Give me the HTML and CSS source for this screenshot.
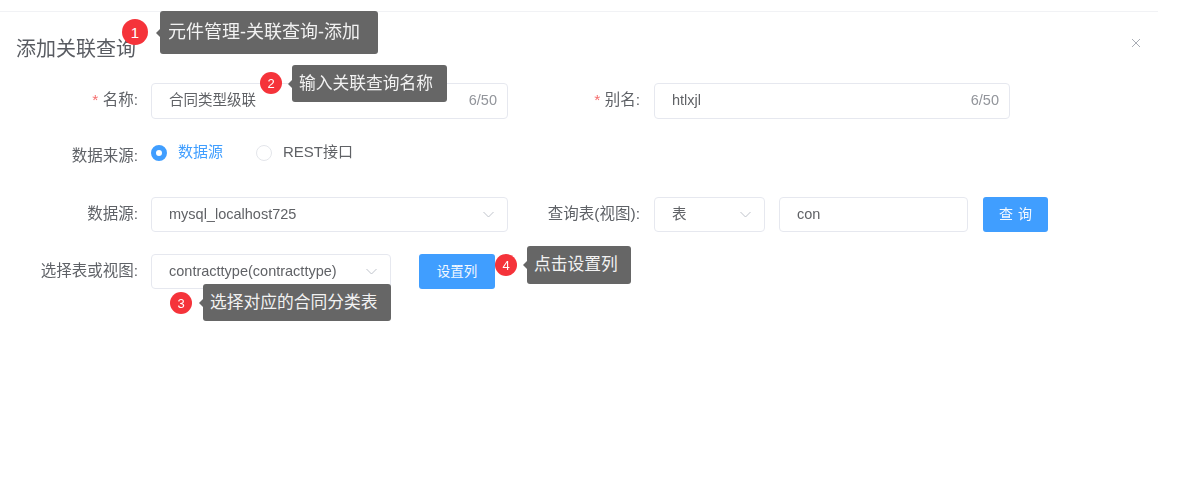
FILE: index.html
```html
<!DOCTYPE html>
<html lang="zh">
<head>
<meta charset="utf-8">
<title>添加关联查询</title>
<link rel="stylesheet" href="styles.css">
</head>
<body>
<div class="page">
  <div class="topline"></div>
  <header class="head">
    <h1 class="title">添加关联查询</h1>
    <svg class="close" width="10" height="10" viewBox="0 0 10 10"><path d="M1 1l8 8M9 1L1 9" /></svg>
  </header>
  <form class="form">
    <div class="row row-name">
      <label class="lab"><i>*</i> 名称:</label>
      <div class="box w357"><span>合同类型级联</span><em>6/50</em></div>
      <label class="lab lab2"><i>*</i> 别名:</label>
      <div class="box w356"><span>htlxjl</span><em>6/50</em></div>
    </div>
    <div class="row row-radio">
      <label class="lab lab-low">数据来源:</label>
      <div class="radios">
        <span class="radio on"><b></b>数据源</span>
        <span class="radio"><b></b>REST接口</span>
      </div>
    </div>
    <div class="row row-ds">
      <label class="lab">数据源:</label>
      <div class="box w357"><span>mysql_localhost725</span><svg class="chev" viewBox="0 0 12 7"><path d="M1 1l5 5 5-5"/></svg></div>
      <label class="lab lab2">查询表(视图):</label>
      <div class="box w111"><span>表</span><svg class="chev" viewBox="0 0 12 7"><path d="M1 1l5 5 5-5"/></svg></div>
      <div class="box w189"><span>con</span></div>
      <button type="button" class="btn btn-q">查 询</button>
    </div>
    <div class="row row-tb">
      <label class="lab">选择表或视图:</label>
      <div class="box w240"><span>contracttype(contracttype)</span><svg class="chev" viewBox="0 0 12 7"><path d="M1 1l5 5 5-5"/></svg></div>
      <button type="button" class="btn btn-c">设置列</button>
    </div>
  </form>

  <div class="badge b1">1</div>
  <div class="tip t1">元件管理-关联查询-添加</div>
  <div class="badge b2">2</div>
  <div class="tip t2">输入关联查询名称</div>
  <div class="badge b3">3</div>
  <div class="tip t3">选择对应的合同分类表</div>
  <div class="badge b4">4</div>
  <div class="tip t4">点击设置列</div>
</div>
</body>
</html>
```
FILE: styles.css
```css
* { box-sizing: border-box; }
html, body { margin: 0; padding: 0; background: #fff; }
body { font-family: "Liberation Sans", "Noto Sans CJK SC", sans-serif; color: #606266; overflow: hidden; }
.page { position: relative; width: 1191px; height: 482px; filter: blur(0.7px); overflow: hidden; }
.topline { height: 1px; width: 1158px; margin-top: 11px; background: #f1f2f5; }
.head { display: flex; justify-content: space-between; align-items: center; height: 52px; padding: 14px 50px 0 16px; }
.title { margin: 0; font-size: 20px; font-weight: 400; color: #595c62; line-height: 28px; position: relative; top: 4px; }
.close { margin-top: -4px; fill: none; stroke: #a9adb5; stroke-width: 1; }
.form { padding-top: 19px; font-size: 14.5px; }
.row { display: flex; align-items: center; }
.row-name { height: 36px; }
.row-radio { height: 36px; margin-top: 16px; }
.row-ds { height: 35px; margin-top: 26px; }
.row-tb { height: 35px; margin-top: 22px; }
.lab { width: 138px; flex: none; text-align: right; font-size: 15.5px; line-height: 20px; color: #5f6267; margin-right: 13px; white-space: nowrap; position: relative; top: -1px; }
.lab-low { top: 3px; }
.lab i { color: #f56c6c; font-style: normal; }
.lab2 { width: 132px; margin-right: 14px; }
.box { display: flex; align-items: center; justify-content: space-between; height: 100%; padding: 0 10px 0 17px; background: #fff; border: 1px solid #e6e8ef; border-radius: 4px; font-size: 14.5px; line-height: 20px; color: #606266; flex: none; }
.box span { position: relative; top: -1px; }
.box em { font-style: normal; font-size: 14.5px; color: #92959b; position: relative; top: -1px; }
.w356 { width: 356px; }
.w357 { width: 357px; }
.w111 { width: 111px; margin-right: 14px; }
.w189 { width: 189px; }
.w240 { width: 240px; }
.chev { width: 13px; height: 7px; margin-right: 2px; fill: none; stroke: #c0c4cc; stroke-width: 1; }
.radios { display: flex; align-items: center; gap: 33px; margin-top: -2px; font-size: 15px; line-height: 20px; }
.radio { display: flex; align-items: center; gap: 11px; color: #606266; }
.radio b { width: 16px; height: 16px; border-radius: 50%; border: 1px solid #e3e5ea; background: #fff; position: relative; top: 1px; }
.radio.on { color: #409eff; }
.radio.on b { border: 5px solid #409eff; }
.btn { height: 35px; border: 0; border-radius: 3px; background: #409eff; color: #f4f9ff; font: 14px "Liberation Sans", "Noto Sans CJK SC", sans-serif; flex: none; padding: 0 0 4px; }
.btn-q { width: 65px; margin-left: 15px; word-spacing: 1px; }
.btn-c { width: 76px; margin-left: 28px; font-size: 13.5px; }
.tip { position: absolute; display: flex; align-items: center; background: #666; color: #f2f2f2; border-radius: 3px; font-size: 16.75px; line-height: 22px; white-space: nowrap; padding: 0 0 0 7px; }
.tip::before { content: ""; position: absolute; left: -4px; top: 50%; margin-top: -4px; border-style: solid; border-width: 4px 4px 4px 0; border-color: transparent #666 transparent transparent; }
.t1 { left: 160px; top: 11px; width: 218px; height: 43px; font-size: 18px; padding: 0 0 2px 8px; }
.t2 { left: 292px; top: 65px; width: 155px; height: 37px; }
.t3 { left: 203px; top: 284px; width: 188px; height: 37px; }
.t4 { left: 527px; top: 246px; width: 104px; height: 38px; }
.badge { position: absolute; display: flex; align-items: center; justify-content: center; width: 22px; height: 22px; border-radius: 50%; background: #f5333a; color: #fff; font-size: 13px; }
.b1 { left: 122px; top: 19px; width: 26px; height: 26px; font-size: 15px; }
.b2 { left: 260px; top: 72px; }
.b3 { left: 170px; top: 292px; }
.b4 { left: 495px; top: 254px; }
```
